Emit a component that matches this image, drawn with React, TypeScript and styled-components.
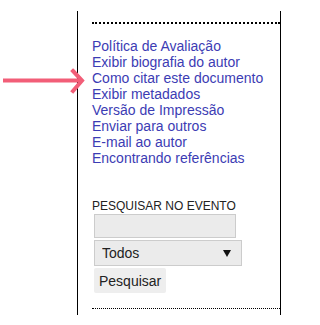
import styled, { createGlobalStyle } from 'styled-components';

const GlobalStyle = createGlobalStyle`
  html, body {
    margin: 0;
    padding: 0;
    background: #fff;
  }
  body {
    font-family: "Liberation Sans", Arial, sans-serif;
  }
`;

const Page = styled.div`
  position: relative;
  width: 290px;
  height: 325px;
  padding: 11px 0 0 77px;
  box-sizing: border-box;
`;

// pink annotation arrow pointing at the sidebar
const Pointer = styled.svg`
  position: absolute;
  left: 0;
  top: 66px;
`;

const Sidebar = styled.aside`
  width: 204px;
  height: 304px;
  box-sizing: border-box;
  border-left: 1px solid #000;
  border-right: 1px solid #000;
  padding-left: 14px;
  display: flex;
  flex-direction: column;
`;

const Divider = styled.div<{ $thick?: boolean; $gap: number }>`
  margin-top: ${p => p.$gap}px;
  border-top: ${p => (p.$thick ? 2 : 1)}px dotted #000;
`;

const LinkList = styled.ul`
  list-style: none;
  margin: 14px 0 0;
  padding: 0;
  font-size: 14px;
  line-height: 16px;
`;

const LinkItem = styled.li`
  a {
    color: #3c3cb4;
    text-decoration: none;
  }
`;

const SearchBlock = styled.form`
  margin: 33px 0 0;
  display: flex;
  flex-direction: column;
  align-items: flex-start;
  gap: 2px;
`;

const SearchLabel = styled.label`
  font-size: 12px;
  line-height: 14px;
  color: #222;
  margin-bottom: -1px;
`;

const TextField = styled.input`
  width: 142px;
  height: 24px;
  margin: 0 0 0 2px;
  box-sizing: border-box;
  border: 1px solid #ccc;
  background: #ebebeb;
  font: 14px "Liberation Sans", Arial, sans-serif;
  padding: 0 6px;
`;

const SelectWrap = styled.div`
  position: relative;
  margin-left: 2px;
`;

const Select = styled.select`
  appearance: none;
  width: 148px;
  height: 26px;
  box-sizing: border-box;
  border: 1px solid #ccc;
  border-radius: 0;
  background: #ebebeb;
  color: #222;
  font: 14px "Liberation Sans", Arial, sans-serif;
  padding: 0 0 0 7px;
`;

const Caret = styled.svg`
  position: absolute;
  right: 11px;
  top: 10px;
  pointer-events: none;
`;

const SubmitButton = styled.button`
  margin-left: 2px;
  height: 25px;
  padding: 0 5px;
  border: none;
  border-radius: 2px;
  background: #eee;
  color: #222;
  font: 14px "Liberation Sans", Arial, sans-serif;
`;

const links = [
  'Política de Avaliação',
  'Exibir biografia do autor',
  'Como citar este documento',
  'Exibir metadados',
  'Versão de Impressão',
  'Enviar para outros',
  'E-mail ao autor',
  'Encontrando referências',
];

export default function App() {
  return (
    <Page>
      <GlobalStyle />
      <Pointer width="90" height="30" viewBox="0 0 90 30">
        <line x1="3" y1="14.5" x2="82" y2="14.5" stroke="#f25e78" strokeWidth="4" />
        <polyline
          points="73,5 82,14.5 73,25"
          fill="none"
          stroke="#f25e78"
          strokeWidth="4"
          strokeLinecap="square"
        />
      </Pointer>
      <Sidebar>
        <Divider $thick $gap={11} />
        <LinkList>
          {links.map(text => (
            <LinkItem key={text}>
              <a href="#">{text}</a>
            </LinkItem>
          ))}
        </LinkList>
        <SearchBlock onSubmit={e => e.preventDefault()}>
          <SearchLabel htmlFor="q">PESQUISAR NO EVENTO</SearchLabel>
          <TextField id="q" type="text" />
          <SelectWrap>
            <Select defaultValue="todos">
              <option value="todos">Todos</option>
            </Select>
            <Caret width="8" height="7" viewBox="0 0 8 7">
              <polygon points="0,0 8,0 4,7" fill="#111" />
            </Caret>
          </SelectWrap>
          <SubmitButton type="submit">Pesquisar</SubmitButton>
        </SearchBlock>
        <Divider $gap={15} />
      </Sidebar>
    </Page>
  );
}
